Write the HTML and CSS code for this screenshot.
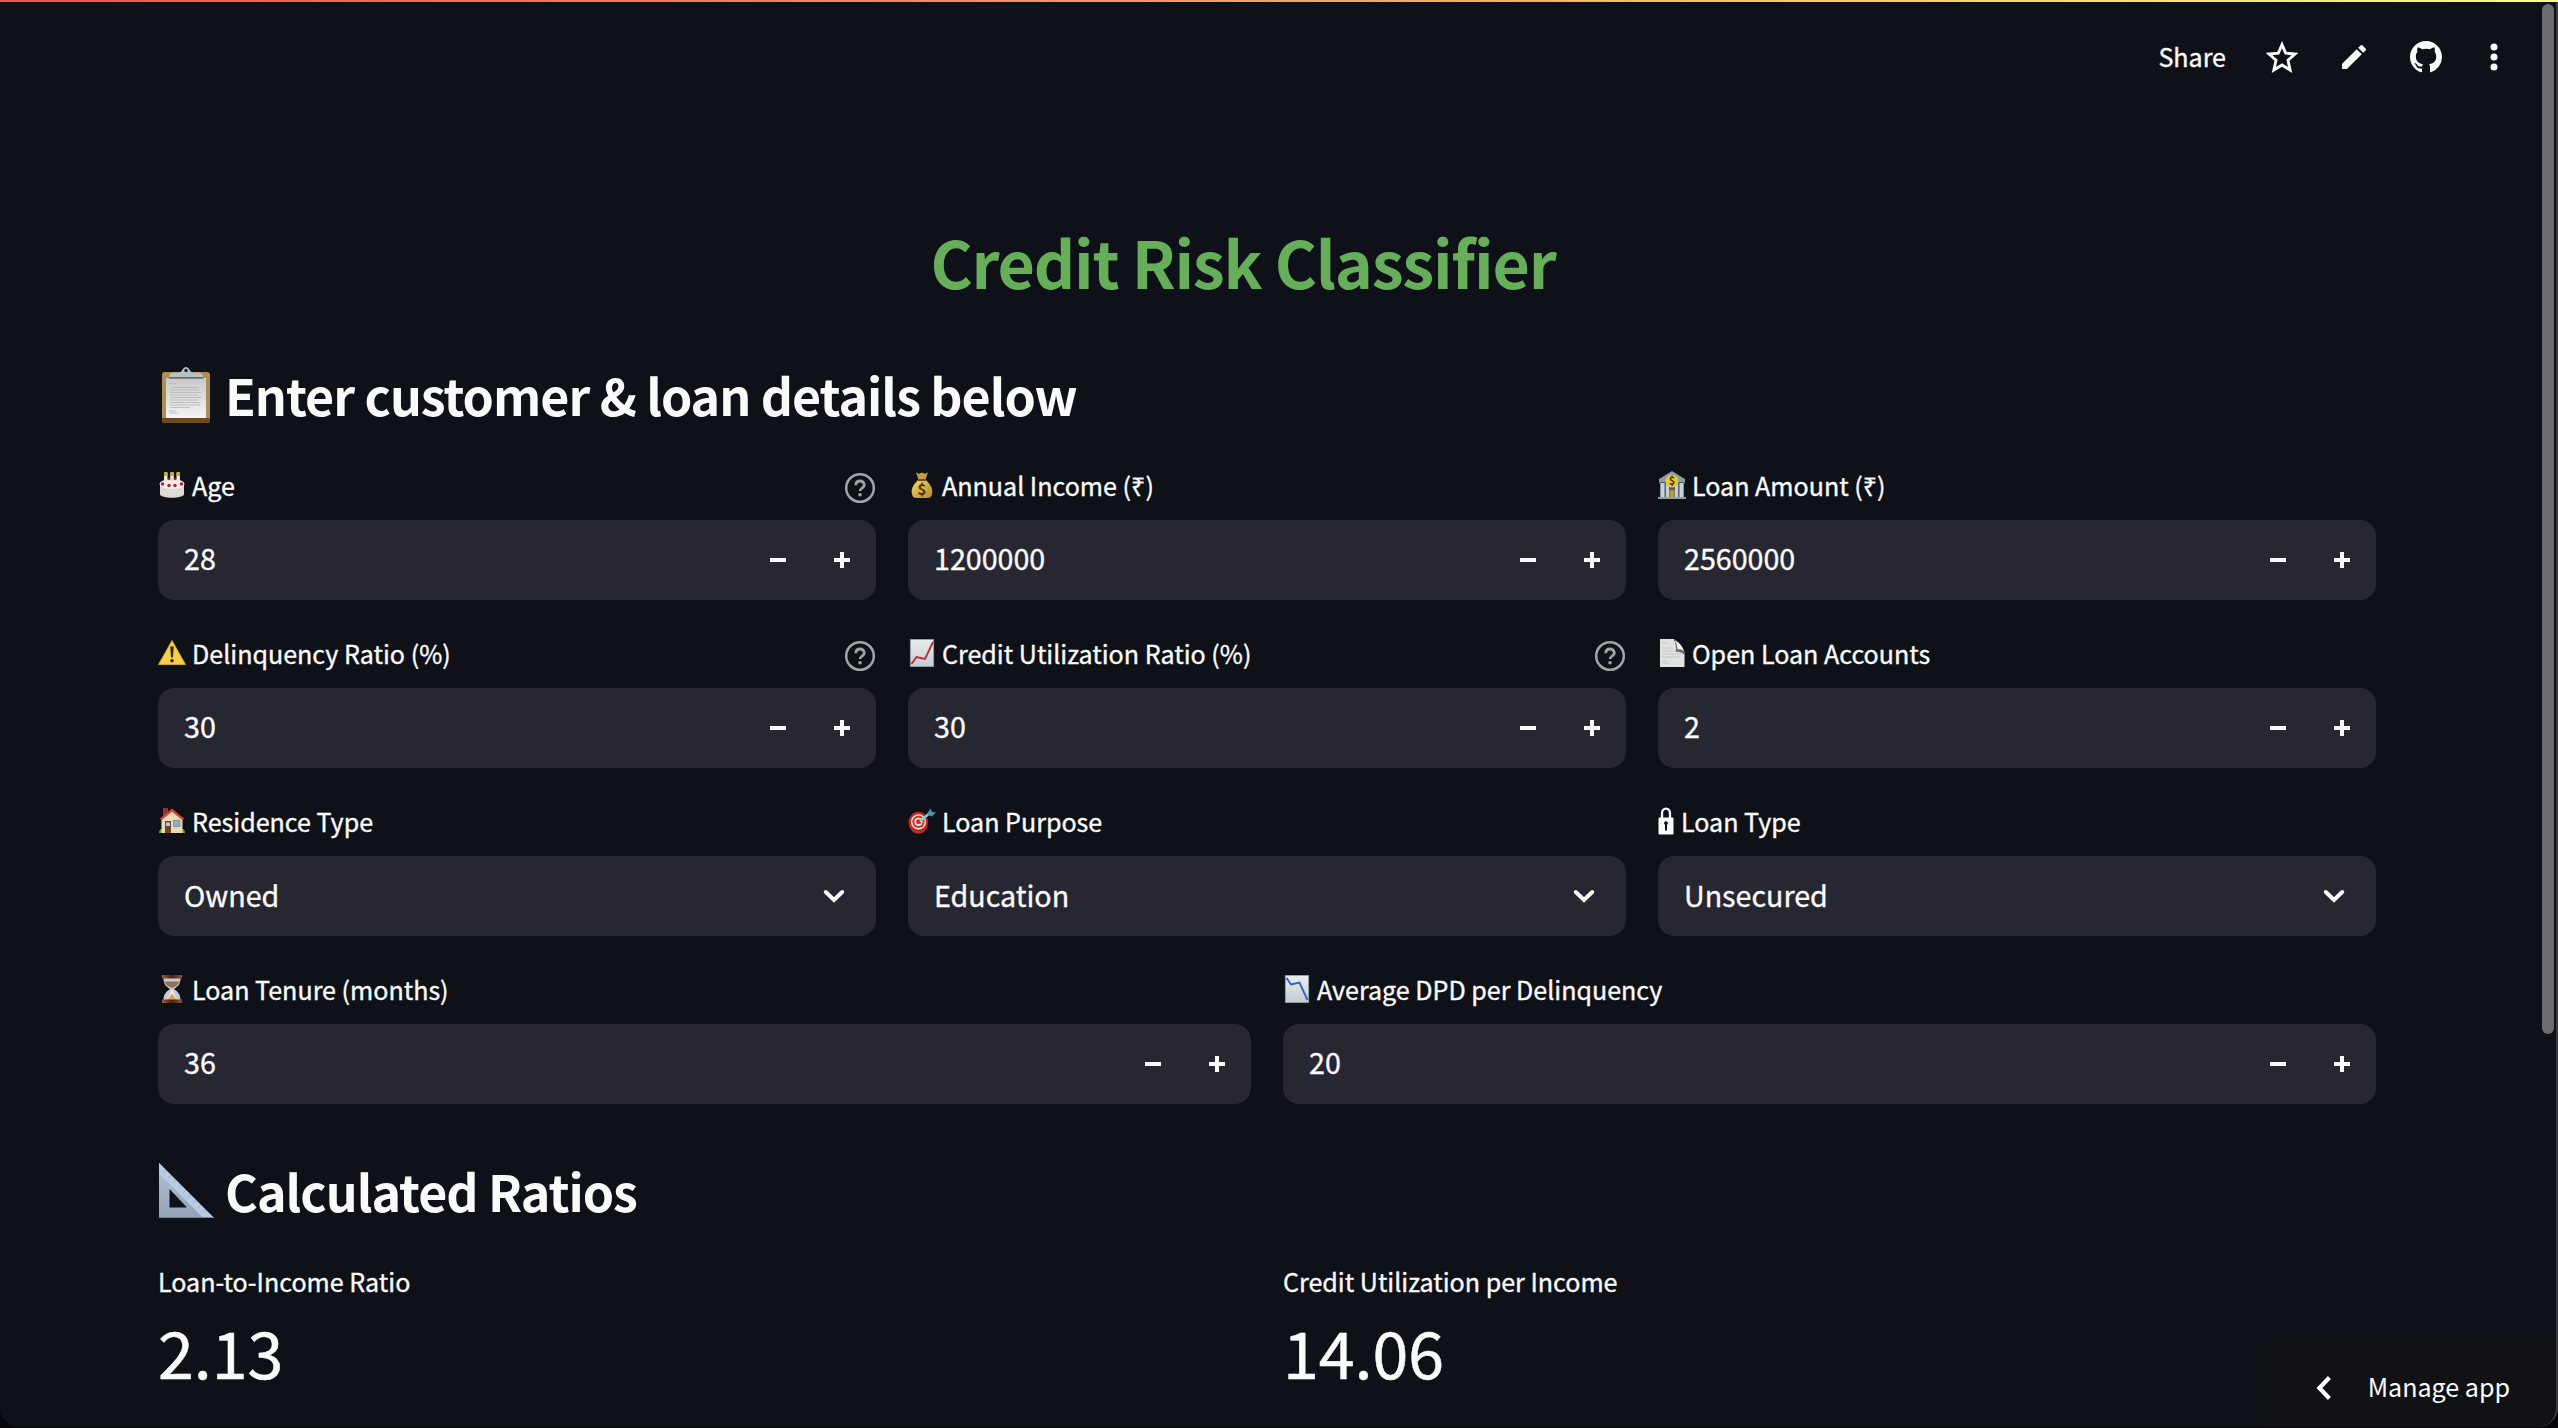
FILE: index.html
```html
<!DOCTYPE html>
<html lang="en">
<head>
<meta charset="utf-8">
<title>Credit Risk Classifier</title>
<link rel="stylesheet" href="styles.css">
</head>
<body>
<svg class="defs" aria-hidden="true">
  <defs>
    <linearGradient id="paper" x1="0" y1="0" x2="0" y2="1"><stop offset="0" stop-color="#e9edf2"/><stop offset="1" stop-color="#c3ccd4"/></linearGradient>
    <linearGradient id="sheet" x1="0" y1="0" x2="0" y2="1"><stop offset="0" stop-color="#c9c9c9"/><stop offset="1" stop-color="#f4f4f4"/></linearGradient>
    <linearGradient id="gold" x1="0" y1="0" x2="1" y2="1"><stop offset="0" stop-color="#f3d774"/><stop offset="1" stop-color="#b98a22"/></linearGradient>
    <linearGradient id="wood" x1="0" y1="0" x2="1" y2="0"><stop offset="0" stop-color="#9a5a38"/><stop offset=".5" stop-color="#4a2110"/><stop offset="1" stop-color="#8c5033"/></linearGradient>
    <linearGradient id="steel" x1="0" y1="0" x2="0" y2="1"><stop offset="0" stop-color="#b4c2d6"/><stop offset="1" stop-color="#94a2b8"/></linearGradient>
  </defs>
  <symbol id="help" viewBox="0 0 32 32"><g fill="none" stroke="currentColor" stroke-width="2.5"><circle cx="16" cy="16" r="13.8"/><path d="M11.8 13.2c0-2.8 1.9-4.2 4.2-4.2s4.3 1.5 4.3 3.9c0 3-4.2 3.2-4.2 6.2" stroke-width="2.8"/></g><circle cx="16" cy="22.8" r="1.8" fill="currentColor"/></symbol>
  <symbol id="minus" viewBox="0 0 16 16"><path d="M0 6h16v4H0z" fill="currentColor"/></symbol>
  <symbol id="plus" viewBox="0 0 16 16"><path d="M0 6h6V0h4v6h6v4h-6v6H6v-6H0z" fill="currentColor"/></symbol>
  <symbol id="down" viewBox="0 0 24 16"><path d="M3.8 4l8.2 8 8.2-8" fill="none" stroke="currentColor" stroke-width="4" stroke-linecap="round"/></symbol>
</svg>

<div class="rainbow"></div>
<header class="toolbar">
  <span class="share">Share</span>
  <svg class="ico star" viewBox="0 0 32 32"><path d="M16 3.600l3.700 8.600 9.300.8-7 6.200 2.100 9.800-8.100-5-8.100 5L10 19.200l-7-6.200 9.300-.8z" fill="none" stroke="currentColor" stroke-width="2.900"/></svg>
  <svg class="ico pencil" viewBox="3 3 18 18"><path fill="currentColor" d="M3 17.460v3.040c0 .28.22.5.5.5h3.040c.13 0 .26-.05.35-.15L17.810 9.940l-3.750-3.750L3.150 17.100c-.1.1-.15.220-.15.360zM20.710 7.040c.39-.39.39-1.020 0-1.410l-2.340-2.340c-.39-.39-1.020-.39-1.410 0l-1.830 1.830 3.750 3.750 1.830-1.830z"/></svg>
  <svg class="ico github" viewBox="0 0 16 16"><path fill="currentColor" d="M8 0C3.580 0 0 3.580 0 8c0 3.540 2.290 6.530 5.470 7.590.4.070.55-.17.55-.38 0-.19-.01-.82-.01-1.490-2.010.37-2.530-.49-2.690-.94-.09-.23-.48-.94-.82-1.130-.28-.15-.68-.52-.01-.53.63-.01 1.080.58 1.230.82.72 1.210 1.870.87 2.330.66.070-.52.28-.87.51-1.070-1.780-.2-3.640-.89-3.640-3.950 0-.87.31-1.590.82-2.150-.08-.2-.36-1.020.08-2.120 0 0 .67-.21 2.200.82.64-.18 1.320-.27 2-.27s1.360.09 2 .27c1.530-1.040 2.200-.82 2.200-.82.44 1.100.16 1.920.08 2.120.51.56.82 1.270.82 2.150 0 3.070-1.870 3.750-3.650 3.950.29.25.54.73.54 1.480 0 1.070-.01 1.930-.01 2.200 0 .21.15.46.55.38A8.010 8.010 0 0 0 16 8c0-4.420-3.580-8-8-8z"/></svg>
  <svg class="ico dots" viewBox="0 0 8 28"><g fill="currentColor"><circle cx="4" cy="4" r="3.500"/><circle cx="4" cy="14" r="3.500"/><circle cx="4" cy="24" r="3.500"/></g></svg>
</header>

<main class="page">
  <h1 class="title">Credit Risk Classifier</h1>

  <h2 class="section">
    <svg class="emoji-lg" viewBox="0 0 56 56"><rect x="4" y="5" width="48" height="51" rx="3" fill="#b08c54"/><path d="M4 51h48v2a3 3 0 0 1-3 3H7a3 3 0 0 1-3-3z" fill="#6d4a1d"/><rect x="8" y="11" width="40" height="40" fill="url(#sheet)"/><path d="M11 10.500c0-4 2-5 6-5h5c2-1 3-5.500 6-5.500s4 4.500 6 5.500h5c4 0 6 1 6 5z" fill="#b9bfc6"/><path d="M11 10h34v1.800H11z" fill="#6f6c68"/><circle cx="28" cy="3.500" r="1.700" fill="#20242c"/><path d="M11 16.500h7M14 20.500h26M12 23h29M12 25.500h31M12 28h28M12 30.500h31M12 33h28M12 35.500h30M12 38h30M12 40.500h20M11 44h7M12 46h9" stroke="#b4b4b4" stroke-width=".8"/></svg>
    <span>Enter customer &amp; loan details below</span>
  </h2>

  <div class="rows">
    <div class="row">
      <div class="field">
        <div class="label">
          <svg class="emoji" viewBox="0 0 28 28"><path d="M2 12v11c0 5 24 5 24 0V12z" fill="#dedad5"/><ellipse cx="14" cy="13" rx="12.400" ry="5" fill="#f6f3ef"/><path d="M6 2h3.500v11H6zM12.300 2h3.500v11h-3.500zM18.500 2H22v11h-3.500z" fill="#eee9d6"/><path d="M6 1h3.500v4H6zM12.300 1h3.500v4h-3.500zM18.500 1H22v4h-3.500z" fill="#c2ac38"/><g fill="#b0203c"><circle cx="4.500" cy="13" r="1.800"/><circle cx="11" cy="14.500" r="1.800"/><circle cx="17" cy="14.500" r="1.800"/><circle cx="23.500" cy="13" r="1.800"/><circle cx="11" cy="8" r="1.300"/><circle cx="17" cy="8" r="1.300"/></g></svg>
          <span>Age</span><svg class="help"><use href="#help"/></svg>
        </div>
        <div class="control"><span>28</span><svg class="step"><use href="#minus"/></svg><svg class="step"><use href="#plus"/></svg></div>
      </div>
      <div class="field">
        <div class="label">
          <svg class="emoji" viewBox="0 0 28 28"><path d="M10 9h8c6 6 7 10 6 14-.5 3-2 4-5 4H9c-3 0-4.500-1-5-4-1-4 0-8 6-14z" fill="url(#gold)"/><path d="M8 1.500l3 1.200 3-1.200 3 1.200 3-1.200-2.500 7h-7z" fill="#c59c43"/><path d="M10 8h8v2h-8z" fill="#7c4d20"/><text x="14" y="24" class="coin">$</text></svg>
          <span>Annual Income (₹)</span>
        </div>
        <div class="control"><span>1200000</span><svg class="step"><use href="#minus"/></svg><svg class="step"><use href="#plus"/></svg></div>
      </div>
      <div class="field">
        <div class="label">
          <svg class="emoji" viewBox="0 0 28 28"><path d="M14 0l13 8v4H1V8z" fill="#8b9da0"/><path d="M2 11h24v15H2z" fill="#526064"/><path d="M2.500 12h4v14h-4zM8 12h3v14H8zM17 12h3v14h-3zM21.500 12h4v14h-4z" fill="#c7d0d5"/><path d="M11.500 19h5v8h-5z" fill="#b39642"/><path d="M0 26h28v2H0z" fill="#93a29f"/><circle cx="14" cy="10" r="6.500" fill="#e7c63b"/><text x="14" y="14" class="coin coin-sm">$</text></svg>
          <span>Loan Amount (₹)</span>
        </div>
        <div class="control"><span>2560000</span><svg class="step"><use href="#minus"/></svg><svg class="step"><use href="#plus"/></svg></div>
      </div>
    </div>

    <div class="row">
      <div class="field">
        <div class="label">
          <svg class="emoji" viewBox="0 0 28 28"><path d="M14 1.500L27.500 25.500H.5z" fill="#f8cf4d" stroke="#dba928" stroke-width=".8" stroke-linejoin="round"/><path d="M12.200 7.500h3.600l-.9 11h-1.800z" fill="#33290f"/><circle cx="14" cy="21.800" r="1.800" fill="#33290f"/></svg>
          <span>Delinquency Ratio (%)</span><svg class="help"><use href="#help"/></svg>
        </div>
        <div class="control"><span>30</span><svg class="step"><use href="#minus"/></svg><svg class="step"><use href="#plus"/></svg></div>
      </div>
      <div class="field">
        <div class="label">
          <svg class="emoji" viewBox="0 0 28 28"><path d="M2.400.4h23.200v27.200H2.400z" fill="url(#paper)" stroke="#9da4aa" stroke-width=".8"/><path d="M3.500 25l5-7 8.500 2 8-17" fill="none" stroke="#c3302b" stroke-width="1.900"/></svg>
          <span>Credit Utilization Ratio (%)</span><svg class="help"><use href="#help"/></svg>
        </div>
        <div class="control"><span>30</span><svg class="step"><use href="#minus"/></svg><svg class="step"><use href="#plus"/></svg></div>
      </div>
      <div class="field">
        <div class="label">
          <svg class="emoji" viewBox="0 0 28 28"><path d="M2 0h14c2 6 5 9 10.500 13v15H2z" fill="#e1e1e1"/><path d="M16 0c4 2 9 7 10.500 13v3c-3-3-6-3.500-9-3 1-3 .5-8-1.500-13z" fill="#6c6c6c"/><path d="M17 1.500c4 2 7.500 6 9 10.500-2-1.500-4.500-2-6.500-1.500 0-3-1-6-2.500-9z" fill="#f4f4f4"/><path d="M4 4h6M4 9h11M4 12h12M4 15h19M4 18h18M4 22h5M4 24h7" stroke="#c6c6c6" stroke-width="1"/></svg>
          <span>Open Loan Accounts</span>
        </div>
        <div class="control"><span>2</span><svg class="step"><use href="#minus"/></svg><svg class="step"><use href="#plus"/></svg></div>
      </div>
    </div>

    <div class="row">
      <div class="field">
        <div class="label">
          <svg class="emoji" viewBox="0 0 28 28"><path d="M5 1h5v8H5z" fill="#8e3428"/><path d="M1 26c0-5 4-5 6-3h14c2-2 6-2 6 3z" fill="#6f9a40"/><path d="M3.500 12L14 3l10.500 9v14h-21z" fill="#eadbb8"/><path d="M14 1.500l12 10-1.300 2L14 4.800 3.300 13.500 2 11.500z" fill="#cf4a39"/><path d="M7 14h6v12H7z" fill="#72412b"/><path d="M8 15.500h4v3.500H8z" fill="#a6cbe8"/><path d="M15.500 13.500h6.500v6h-6.500z" fill="#7eb2e2" stroke="#8f826b" stroke-width=".8"/></svg>
          <span>Residence Type</span>
        </div>
        <div class="control select"><span>Owned</span><svg class="caret"><use href="#down"/></svg></div>
      </div>
      <div class="field">
        <div class="label">
          <svg class="emoji" viewBox="0 0 28 28"><ellipse cx="10.300" cy="15.800" rx="9.800" ry="11" fill="#b92a23"/><circle cx="10.500" cy="14.800" r="7.600" fill="#f0e8e5"/><circle cx="10.500" cy="14.800" r="6.200" fill="#cf352d"/><circle cx="10.500" cy="14.800" r="4.100" fill="#f0e8e5"/><circle cx="10.500" cy="14.800" r="2.500" fill="#cf352d"/><path d="M12 14L22 6" stroke="#80d3d5" stroke-width="2.300"/><path d="M19 7l3.500-5.500L24 5l4 .5-4.500 4z" fill="#4b9aa8"/></svg>
          <span>Loan Purpose</span>
        </div>
        <div class="control select"><span>Education</span><svg class="caret"><use href="#down"/></svg></div>
      </div>
      <div class="field">
        <div class="label">
          <svg class="emoji emoji-lock" viewBox="0 0 16 28"><path d="M4 12V6.500c0-6.500 8-6.500 8 0V12" fill="none" stroke="#fafafa" stroke-width="2.300"/><rect x=".5" y="10.500" width="15" height="17" rx="1" fill="#fafafa"/><path d="M6.200 16.800a1.900 1.900 0 1 1 3.600 0L9 18v5.500H7V18z" fill="#0e1117"/></svg>
          <span>Loan Type</span>
        </div>
        <div class="control select"><span>Unsecured</span><svg class="caret"><use href="#down"/></svg></div>
      </div>
    </div>

    <div class="row">
      <div class="field">
        <div class="label">
          <svg class="emoji" viewBox="0 0 28 28"><path d="M5.500 3h17c0 6-2 8-6.500 11 4.500 3 6.500 6 6.500 11h-17c0-5 2-8 6.500-11-4.500-3-6.500-5-6.500-11z" fill="#c5cbd6"/><path d="M6.500 6.500h15c-1 3-3 5-7.500 6.500-4.500-1.500-6.500-3.500-7.500-6.500z" fill="#947254"/><path d="M14 14l5 10.500H9z" fill="#f5ecdd"/><path d="M14 18.500l5 6.500H9z" fill="#d0a566"/><path d="M4 0h20v3.500H4zM4 24.500h20V28H4z" fill="url(#wood)"/></svg>
          <span>Loan Tenure (months)</span>
        </div>
        <div class="control"><span>36</span><svg class="step"><use href="#minus"/></svg><svg class="step"><use href="#plus"/></svg></div>
      </div>
      <div class="field">
        <div class="label">
          <svg class="emoji" viewBox="0 0 28 28"><path d="M2.400.4h23.200v27.200H2.400z" fill="url(#paper)" stroke="#9da4aa" stroke-width=".8"/><path d="M3.500 3l4.500 6.500L16.500 7.500 24.500 25" fill="none" stroke="#2c63c4" stroke-width="1.900"/></svg>
          <span>Average DPD per Delinquency</span>
        </div>
        <div class="control"><span>20</span><svg class="step"><use href="#minus"/></svg><svg class="step"><use href="#plus"/></svg></div>
      </div>
    </div>
  </div>

  <h2 class="section section-ratios">
    <svg class="emoji-lg" viewBox="0 0 56 56"><path d="M1 0l55 55H1zM11.500 26v18.500h17.500z" fill="url(#steel)" fill-rule="evenodd"/><path d="M1 0l55 55H45.500L1 10.500z" fill="#b9cbe2"/><path d="M5 10l3-3M10 15l3-3M15 20l3-3M20 25l3-3M25 30l3-3M30 35l3-3M35 40l3-3M40 45l3-3M45 50l3-3" stroke="#91a5bf" stroke-width=".8"/><path d="M1 54.500h54" stroke="#77859a"/></svg>
    <span>Calculated Ratios</span>
  </h2>
  <div class="row">
    <div class="metric"><div class="metric-label">Loan-to-Income Ratio</div><div class="metric-value">2.13</div></div>
    <div class="metric"><div class="metric-label">Credit Utilization per Income</div><div class="metric-value">14.06</div></div>
  </div>
</main>

<div class="manage">
  <svg class="back" viewBox="0 0 16 24"><path d="M13.400 1.500L3.400 12l10 10.500" fill="none" stroke="currentColor" stroke-width="4.200"/></svg>
  <span>Manage app</span>
</div>
<div class="scrollbar"></div>
<div class="frame"></div>
</body>
</html>
```
FILE: styles.css
```css
* { box-sizing: border-box; }

body {
  margin: 0;
  width: 2558px;
  height: 1428px;
  position: relative;
  overflow: hidden;
  background: #0e1117;
  color: #fafafa;
  font-family: "Noto Sans CJK SC", "Noto Sans", sans-serif;
  font-size: 25.07px;
}

svg { display: block; flex: none; }
.defs { position: absolute; width: 0; height: 0; }

.rainbow {
  height: 2px;
  background: linear-gradient(90deg, #f0524f, #f2a169 50%, #fbfb86);
}

.toolbar {
  height: 112px;
  padding-right: 60px;
  display: flex;
  align-items: center;
  justify-content: flex-end;
}
.share { line-height: 40px; margin: 0 40px 5px 0; -webkit-text-stroke: .35px; }
.ico { margin-bottom: 2px; }
.star { width: 32px; height: 32px; margin-right: 44px; }
.pencil { width: 24px; height: 24px; margin-right: 44px; }
.github { width: 32px; height: 32px; margin-right: 48px; }
.dots { width: 8px; height: 28px; }

.page { padding: 104px 182px 0 158px; }

.title {
  margin: 0 48px 0 0;
  text-align: center;
  font-size: 64.5px;
  line-height: 86px;
  font-weight: 700;
  letter-spacing: -1.25px;
  color: #67ae5b;
}

.section {
  display: flex;
  align-items: center;
  gap: 11px;
  margin: 56px 0 36px;
  font-size: 50.13px;
  line-height: 68px;
  font-weight: 700;
  letter-spacing: -1px;
}
.section-ratios { margin: 52px 0 37px; }
.emoji-lg { width: 56px; height: 56px; margin-top: 2px; }

.rows { display: flex; flex-direction: column; gap: 32px; }
.row { display: flex; gap: 32px; }
.field, .metric { flex: 1 1 0; }

.label {
  display: flex;
  align-items: center;
  gap: 6px;
  height: 42px;
  margin-bottom: 14px;
  -webkit-text-stroke: .35px;
}
.emoji { width: 28px; height: 28px; }
.emoji-lock { width: 16px; margin-right: 1px; }
.coin { font-size: 15px; font-weight: 700; text-anchor: middle; fill: #453412; -webkit-text-stroke: 0; }
.coin-sm { font-size: 11px; }
.help { width: 32px; height: 32px; margin: 6px 0 0 auto; color: #a3a4a7; }

.control {
  display: flex;
  align-items: center;
  height: 80px;
  padding: 0 26px;
  border-radius: 16px;
  background: #262730;
  font-size: 28.65px;
  -webkit-text-stroke: .35px;
}
.control span { flex: 1; line-height: 40px; padding-bottom: 5px; height: 45px; }
.select span { padding-bottom: 3px; height: 43px; }
.step { width: 16px; height: 16px; margin-left: 48px; }
.caret { width: 24px; height: 16px; margin-right: 4px; }

.metric-label { line-height: 40px; margin-bottom: 7px; -webkit-text-stroke: .35px; }
.metric-value { font-size: 64.5px; line-height: 86px; -webkit-text-stroke: .5px; }

/* overlays on top of the scrolling page */
.manage {
  position: absolute;
  right: 0;
  bottom: 0;
  width: 296px;
  height: 88px;
  padding: 6px 48px 0 54px;
  display: flex;
  align-items: center;
  justify-content: space-between;
  border-radius: 16px 0 0 0;
  background: #111216;
  color: #fff;
}
.manage span { line-height: 40px; padding-bottom: 3px; letter-spacing: 0; }
.back { width: 16px; height: 24px; margin-top: 1px; }

.scrollbar {
  position: absolute;
  left: 2542px;
  top: 4px;
  width: 12px;
  height: 1030px;
  border-radius: 6px;
  background: #6b6c6f;
}

.frame {
  position: absolute;
  inset: 2px 0 1px 0;
  border-right: 2px solid #3c3d40;
  border-radius: 0 0 20px 20px;
  box-shadow: 0 0 0 14px #08060c;
  clip-path: inset(0 0 -1px 0);
}
```
